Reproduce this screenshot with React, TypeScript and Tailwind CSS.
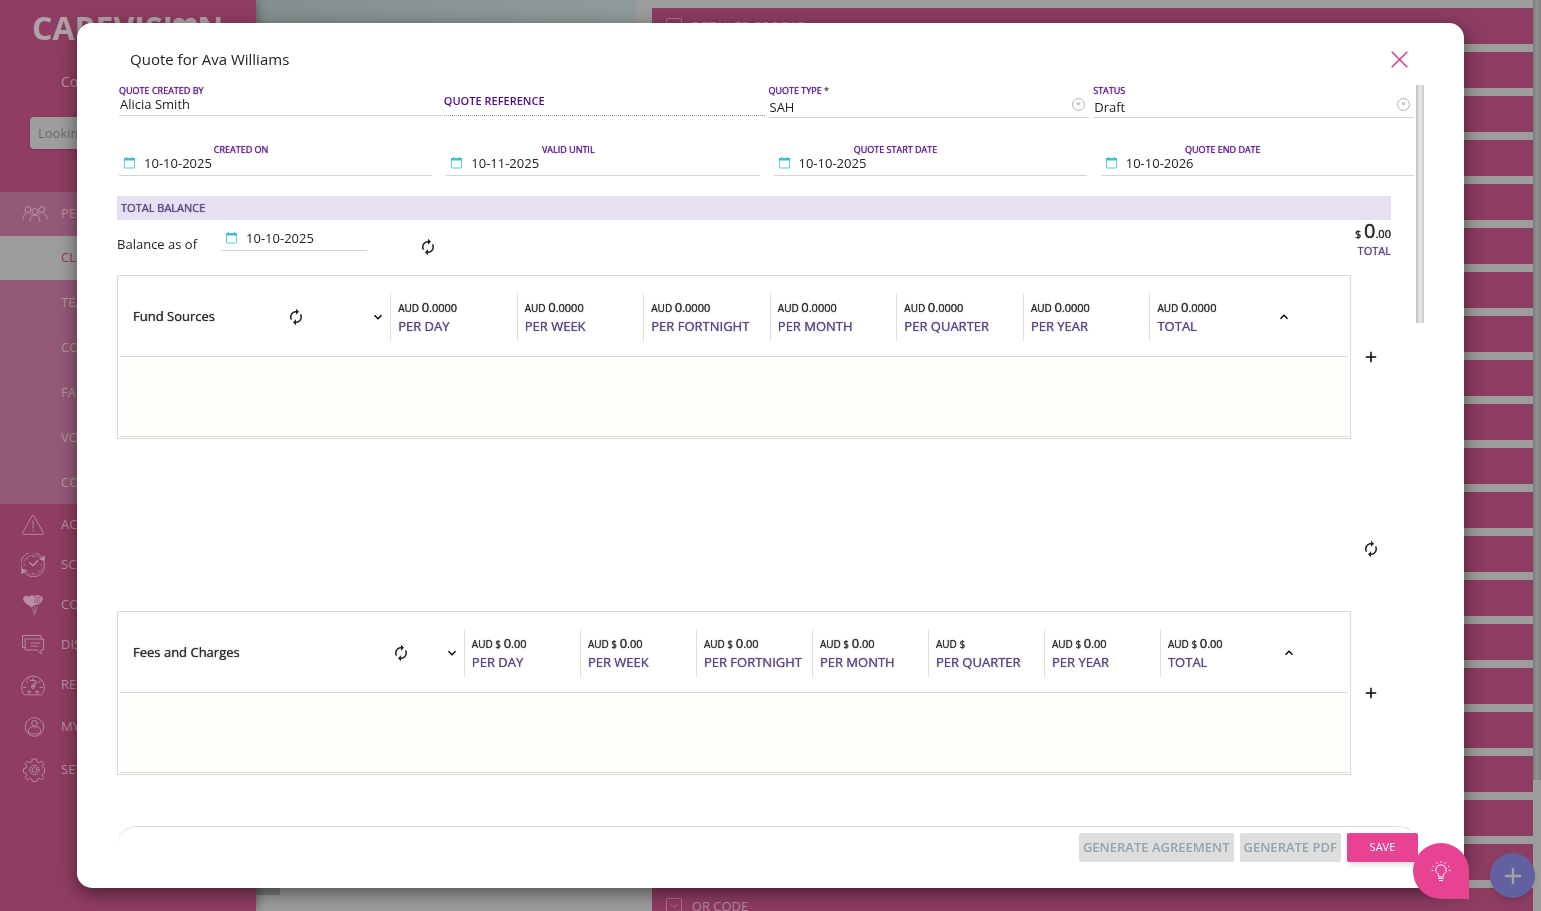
import { useState } from 'react';
import type { ReactNode } from 'react';
import clsx from 'clsx';
import {
  MdAdd,
  MdAutorenew,
  MdKeyboardArrowDown,
  MdKeyboardArrowUp,
} from 'react-icons/md';

const SUB_MENU = ['TEAM', 'CONTACTS', 'FAMILY', 'VOLUNTEERS', 'COMPANIES'];

const PROFILE_SECTIONS = [
  'DETAILED PROFILE',
  ...Array.from({ length: 19 }, () => ''),
  'QR CODE',
];

const PERIODS = [
  'PER DAY',
  'PER WEEK',
  'PER FORTNIGHT',
  'PER MONTH',
  'PER QUARTER',
  'PER YEAR',
  'TOTAL',
];

// Open Sans has no medium cut here, so a second pass of the text thickens it
const HEAVIER = '[text-shadow:0_0_1px_currentColor]';

const LineIcon = ({ children }: { children: ReactNode }) => (
  <svg
    className="size-6 shrink-0"
    viewBox="0 0 24 24"
    fill="none"
    stroke="currentColor"
    strokeWidth="0.9"
    strokeLinecap="round"
    strokeLinejoin="round"
    aria-hidden="true"
  >
    {children}
  </svg>
);

const PeopleIcon = () => (
  <svg
    className="h-5 w-[26px] shrink-0"
    viewBox="0 0 26 20"
    fill="none"
    stroke="currentColor"
    strokeLinecap="round"
    aria-hidden="true"
  >
    <circle cx="6" cy="5.5" r="2.9" />
    <circle cx="20" cy="5.5" r="2.9" />
    <circle cx="13" cy="7.5" r="3" />
    <path d="M1 15c0-3.5 1.5-5.500 4-6.200M8 9.200c1 .6 1.500 1.300 1.900 2M25 15c0-3.500-1.500-5.500-4-6.200M18 9.200c-1 .6-1.500 1.300-1.900 2M8.200 17c0-3.800 1.900-5.800 4.800-5.800s4.800 2 4.800 5.800" />
  </svg>
);

const MENU = [
  {
    label: 'ACTIVITY',
    height: 'h-10',
    icon: (
      <>
        <path d="M11.200 2.600 1.700 19.700c-.5.9 0 1.700 1 1.700h18.600c1 0 1.500-.8 1-1.700L12.800 2.600c-.4-.7-1.200-.7-1.600 0Z" />
        <path d="M12 7.500v7.500M12 17.300v.8" />
      </>
    ),
  },
  {
    label: 'SCHEDULE',
    height: 'h-10',
    icon: (
      <>
        <path d="M1.300 16.500A11.300 11.300 0 0 1 21 5M22.900 8.500A11.300 11.300 0 0 1 3.200 19.200" />
        <path d="M2.600 9A10 10 0 0 1 19.500 5.500M21.400 15A10 10 0 0 1 4.500 18.500" strokeWidth="0.5" />
        <path d="M23.300 3.300v4.200l-4-1.200ZM.8 20.300v-4.200l4 1.200Z" fill="currentColor" />
        <path d="m8.500 9.500 3.500 3.300 4.700-5" strokeWidth="1.3" />
        <path d="M12 3v1M12 20v1M3 12h1M20 12h1M5.600 5.600l.7.7M17.700 17.700l.7.7M5.600 18.400l.7-.7" />
      </>
    ),
  },
  {
    label: 'COMMUNITY',
    height: 'h-10',
    icon: (
      <>
        <path
          d="M9.500 13.500C5 11 1.800 8.500 2.200 5.300 2.600 2.700 6 2 8 4c1.500-2 4-2.200 5.500-.8 2-1.800 4.500-1.500 5.500.3h3l-1.200 1.500h1.500l-1.500 1.500h1.700l-2 1.500h1l-2 1.500h1l-2.500 1.500c-1.500.8-3.500.8-5 1.200L11.500 14Z"
          fill="currentColor"
          stroke="none"
        />
        <path d="m14 4.500 5 .3M13.500 7h5.500M13 9.200l5.500-.2" stroke="#8f3d62" strokeWidth="0.7" />
        <path d="m10 13 3.500 8.500 3-8.500M13.500 12.500l.3 8" strokeWidth="0.6" />
      </>
    ),
  },
  {
    label: 'DISCUSSION',
    height: 'h-10',
    icon: (
      <>
        <path d="M4 14.500H1.500v-12H20V6" />
        <path d="M4.500 6h18v11H20l.2 4-4-4H4.500Z" />
        <path d="M10 10h9M10 13h7" />
      </>
    ),
  },
  {
    label: 'REPORTS',
    height: 'h-10',
    icon: (
      <>
        <path d="M3 21.500C1.500 19.500.6 17 .6 14.500a11.400 11.400 0 0 1 22.800 0c0 2.500-.9 5-2.400 7Z" />
        <path d="M12 5v2.500M5 8l1.700 1.700M19 8l-1.700 1.700M2.500 14.500H5M19 14.500h2.500M7.500 5.500l.7 1.500M9.500 7.500h5" />
        <path d="m11 12.500 4.500-4-2.500 5.500Z" />
        <circle cx="12" cy="14" r="1.500" />
        <circle cx="8" cy="19" r="1.200" />
        <circle cx="16" cy="19" r="1.200" />
      </>
    ),
  },
  {
    label: 'MY PROFILE',
    height: 'h-11',
    icon: (
      <>
        <circle cx="13.500" cy="12" r="9.300" />
        <circle cx="13.500" cy="8.300" r="2.800" />
        <path d="M7.500 17.300v-2.100c0-2.200 2.200-3.400 4-3.400h4c1.800 0 4 1.200 4 3.400v2.100c-3.500 2.300-8.500 2.300-12 0Z" />
      </>
    ),
  },
  {
    label: 'SETTINGS',
    height: 'h-[42px]',
    icon: (
      <>
        <path d="M11.300 1h4.400l.5 2.800 2.200.9 2.300-1.600 2.200 2.300-1.600 2.300.9 2.200 1.300.4v4.400l-1.300.4-.9 2.200 1.600 2.300-2.200 2.300-2.300-1.600-2.200.9-.5 2.300h-4.400l-.5-2.300-2.200-.9-2.300 1.600-2.200-2.300 1.600-2.300-.9-2.200-2.300-.6v-3.800l2.300-.6.9-2.200L4.100 5.600l2.200-2.500 2.300 1.600 2.200-.9Z" />
        <circle cx="13.500" cy="12" r="4.600" />
        <circle cx="13.500" cy="12" r="2.400" />
      </>
    ),
  },
];

const Sidebar = () => (
  <nav className="z-10 w-64 shrink-0 bg-[#8f3d62] text-[13px] text-[#b98fa4] shadow-[2px_0_8px_rgba(0,0,0,0.3)]">
    <div className="flex h-14 items-center pl-8 text-[32px] font-bold text-[#aea3a8]">
      CAREVISI
      <svg className="h-6 w-6" viewBox="0 0 28 24" fill="currentColor" aria-hidden="true">
        <path d="M14 24C5 17 0 12.500 0 7.500 0 3 3.200 0 7.200 0 10 0 12.600 1.500 14 4c1.400-2.500 4-4 6.800-4C24.800 0 28 3 28 7.500 28 12.500 23 17 14 24Z" />
      </svg>
      N
    </div>
    <p className="pt-4 pl-[61px] text-sm leading-5">Coordinator</p>
    <div className="px-[30px] pt-[25px] pb-[43px]">
      <input
        type="search"
        aria-label="Search"
        placeholder="Looking for?"
        className="h-8 w-full rounded-sm bg-[#9e9e9e] px-2 shadow-sm placeholder:text-[#6e6a6c]"
      />
    </div>
    <a href="#people" className="flex h-11 items-center gap-[13px] bg-[#955978] pl-[22px]">
      <PeopleIcon />
      PEOPLE
    </a>
    <a href="#clients" className="flex h-11 items-center bg-[#9e9d9d] pl-[61px] text-[#96375f]">
      CLIENTS
    </a>
    <div className="h-56 bg-[#935a77] text-[#b294a5]">
      {SUB_MENU.map(item => (
        <a key={item} href="#people" className="flex h-[45px] items-center pl-[61px]">
          {item}
        </a>
      ))}
    </div>
    <div className="pt-px">
      {MENU.map(({ label, height, icon }) => (
        <a
          key={label}
          href="#menu"
          className={clsx('flex items-center gap-4 pl-[21px]', height)}
        >
          <LineIcon>{icon}</LineIcon>
          {label}
        </a>
      ))}
    </div>
  </nav>
);

const ProfileSections = () => (
  <div className="flex min-w-0 flex-1 flex-col gap-2 pt-2">
    {PROFILE_SECTIONS.map((title, index) => (
      <div
        key={index}
        className="flex h-9 shrink-0 items-center gap-[10px] bg-[#8d3c62] pl-[14px] text-[13px] leading-4 text-[#b98aa1]"
      >
        {title && (
          <>
            <svg className="size-4" viewBox="0 0 16 16" fill="none" stroke="currentColor" strokeWidth="0.7" aria-hidden="true">
              <rect x="0.500" y="0.500" width="15" height="15" rx="1" />
              <path d="m4.500 6.500 3.500 3 3.500-3" />
            </svg>
            {title}
          </>
        )}
      </div>
    ))}
  </div>
);

const CalendarIcon = () => (
  <svg className="h-3 w-[11px] shrink-0" viewBox="0 0 11 12" fill="none" aria-hidden="true">
    <rect x="0.500" y="1.500" width="10" height="9.500" rx="0.500" stroke="#5fd0d0" />
    <path d="M0 1h11v2.500H0zM2 0h1v2H2zM8 0h1v2H8z" fill="#3fbfc4" />
  </svg>
);

const DateInput = ({ id, value }: { id: string; value: string }) => (
  <div className="flex h-5 items-center gap-[9px] border-b border-[#d6d6d6] pb-[5px] pl-[5px]">
    <CalendarIcon />
    <input
      id={id}
      defaultValue={value}
      className="w-full min-w-0 text-[13px] leading-[14px] text-[#222]"
    />
  </div>
);

const DateField = ({ id, label, value }: { id: string; label: string; value: string }) => (
  <div>
    <label
      htmlFor={id}
      className={clsx('block w-[244px] text-center text-[9px] leading-3 text-[#5b1a8b]', HEAVIER)}
    >
      {label}
    </label>
    <DateInput id={id} value={value} />
  </div>
);

type SelectFieldProps = {
  id: string;
  label: string;
  options: string[];
  required?: boolean;
};

const SelectField = ({ id, label, options, required }: SelectFieldProps) => (
  <div className="px-[2px]">
    <label htmlFor={id} className={clsx('block text-[9px] leading-3 text-[#5b1a8b]', HEAVIER)}>
      {label}
      {required && <span className="text-[#444]"> *</span>}
    </label>
    <div className="flex h-[21px] items-center border-b border-[#d6d6d6] pr-1">
      <select id={id} className="h-5 w-full appearance-none pt-px pl-px text-[13px] text-[#222]">
        {options.map(option => (
          <option key={option}>{option}</option>
        ))}
      </select>
      <svg
        className="mb-[6px] size-[13px] shrink-0"
        viewBox="0 0 13 13"
        fill="none"
        stroke="#a49cab"
        aria-hidden="true"
      >
        <circle cx="6.500" cy="6.500" r="6" strokeWidth="0.800" />
        <path d="M5 4.300 6.500 7.200 8 4.300" />
      </svg>
    </div>
  </div>
);

type Amount = { currency: string; whole?: string; decimals?: string };

type FundPanelProps = {
  title: string;
  titleWidth: string;
  refreshGap: string;
  collapseGap?: string;
  amounts: Amount[];
};

const FundPanel = ({ title, titleWidth, refreshGap, collapseGap, amounts }: FundPanelProps) => (
  <section className="flex items-center">
    <div className="min-w-0 flex-1 border border-[#d9d9d9] px-[2px] pb-px">
      <header className="flex h-20 items-center pt-px">
        <div className={clsx('flex shrink-0 items-center pr-1 pl-[13px]', titleWidth)}>
          <h3 className={clsx('flex-1 text-[13px] text-[#2b2b2b]', HEAVIER)}>{title}</h3>
          <button type="button" aria-label={`Refresh ${title}`} className={refreshGap}>
            <MdAutorenew className="size-[18px] text-[#222]" />
          </button>
          <button type="button" aria-label={`Expand ${title}`}>
            <MdKeyboardArrowDown className="size-4 text-black" />
          </button>
        </div>
        {PERIODS.map((period, index) => {
          const { currency, whole, decimals } = amounts[index];
          return (
            <div
              key={period}
              className={clsx(
                'h-12 min-w-0 flex-1 border-l border-[#dedede] pt-[5px] pl-[7px] whitespace-nowrap',
                HEAVIER,
              )}
            >
              <p className="text-[10px] leading-[18px] text-[#2b2b2b]">
                {currency} <span className="text-[13px]">{whole}</span>
                <span className="text-[11px]">{decimals}</span>
              </p>
              <p className={clsx('text-[13px] leading-[18px] text-[#5c4685]', HEAVIER)}>{period}</p>
            </div>
          );
        })}
        <div className={clsx('w-[72px] shrink-0', collapseGap)}>
          <button type="button" aria-label={`Collapse ${title}`} className="block">
            <MdKeyboardArrowUp className="size-4 text-black" />
          </button>
        </div>
      </header>
      <div className="h-[81px] border-y border-[#dddbd8] bg-[#fffefa]" />
    </div>
    <button type="button" aria-label={`Add to ${title}`} className="flex w-10 justify-center">
      <MdAdd className="size-[18px] text-black" />
    </button>
  </section>
);

const FUND_AMOUNTS: Amount[] = PERIODS.map(() => ({
  currency: 'AUD',
  whole: '0',
  decimals: '.0000',
}));

const FEE_AMOUNTS: Amount[] = PERIODS.map(period =>
  period === 'PER QUARTER'
    ? { currency: 'AUD $' }
    : { currency: 'AUD $', whole: '0', decimals: '.00' },
);

const QuoteDialog = ({ onClose }: { onClose: () => void }) => (
  <div className="fixed inset-0 z-20 px-[5%] py-[23px]">
    <div
      role="dialog"
      aria-labelledby="quote-title"
      className="flex h-full flex-col rounded-[15px] bg-white px-10 shadow-[0_5px_18px_0_rgba(0,0,0,0.5)]"
    >
      <div className="flex h-15 shrink-0 items-center justify-between pt-3 pr-4 pl-[13px]">
        <h2 id="quote-title" className="text-[15px] text-[#222]">
          Quote for Ava Williams
        </h2>
        <button type="button" aria-label="Close" onClick={onClose}>
          <svg className="size-[17px]" viewBox="0 0 17 17" stroke="#d3458c" strokeWidth="1.600" aria-hidden="true">
            <path d="m.7.700 15.600 15.600M16.300.7.700 16.300" />
          </svg>
        </button>
      </div>

      <div className="flex min-h-0 flex-1 overflow-hidden pt-[2px]">
        <div className="min-w-0 flex-1">
          <div className="grid h-[59px] grid-cols-4 items-start">
            <div className="pl-[2px]">
              <label
                htmlFor="created-by"
                className={clsx('block text-[9px] leading-3 text-[#5b1a8b]', HEAVIER)}
              >
                QUOTE CREATED BY
              </label>
              <input
                id="created-by"
                defaultValue="Alicia Smith"
                className="block h-[19px] w-full border-b border-[#d6d6d6] pb-1 pl-px text-[13px] leading-[14px] text-[#222]"
              />
            </div>
            <div className="pr-[2px] pl-[2px]">
              <div className="flex h-[31px] items-center border-b border-dotted border-[#9a9a9a] pt-[2px]">
                <label
                  htmlFor="reference"
                  className="text-[11px] font-semibold whitespace-nowrap text-[#4b0d85]"
                >
                  QUOTE REFERENCE
                </label>
                <input id="reference" className="w-full min-w-0 pl-2 text-[13px]" />
              </div>
            </div>
            <SelectField id="quote-type" label="QUOTE TYPE" options={['SAH']} required />
            <SelectField id="status" label="STATUS" options={['Draft']} />
          </div>

          <div className="grid grid-cols-4 gap-[14px] pr-[2px] pl-[2px]">
            <DateField id="created-on" label="CREATED ON" value="10-10-2025" />
            <DateField id="valid-until" label="VALID UNTIL" value="10-11-2025" />
            <DateField id="start-date" label="QUOTE START DATE" value="10-10-2025" />
            <DateField id="end-date" label="QUOTE END DATE" value="10-10-2026" />
          </div>

          <div className="pt-5 pr-[25px]">
            <h3 className={clsx('bg-[#e7dff2] pl-1 text-[11px] leading-6 text-[#5c4685]', HEAVIER)}>
              TOTAL BALANCE
            </h3>
            <div className="flex h-[55px] items-start">
              <label htmlFor="balance-date" className="w-[104px] pt-[14px] text-[13px] leading-5 text-[#222]">
                Balance as of
              </label>
              <div className="w-[146px] pt-[11px]">
                <DateInput id="balance-date" value="10-10-2025" />
              </div>
              <button type="button" aria-label="Refresh balance" className="pt-[18px] pl-[52px]">
                <MdAutorenew className="size-[18px] text-[#222]" />
              </button>
              <div className={clsx('ml-auto text-right', HEAVIER)}>
                <p className="h-6 text-[11px] leading-[22px] text-[#222]">
                  $ <span className="text-xl leading-[22px]">0</span>.00
                </p>
                <p className={clsx('text-[11px] leading-[14px] text-[#5c4685]', HEAVIER)}>TOTAL</p>
              </div>
            </div>

            <FundPanel
              title="Fund Sources"
              titleWidth="w-[22%]"
              refreshGap="mr-[65px]"
              amounts={FUND_AMOUNTS}
            />
            <div className="flex h-[172px] justify-end pt-[101px]">
              <button type="button" aria-label="Refresh charges" className="flex h-5 w-10 justify-center">
                <MdAutorenew className="size-[18px] text-[#222]" />
              </button>
            </div>
            <FundPanel
              title="Fees and Charges"
              titleWidth="w-[28%]"
              refreshGap="mr-[34px]"
              collapseGap="pl-[5px]"
              amounts={FEE_AMOUNTS}
            />
          </div>
        </div>
        <div className="h-[238px] w-2 bg-linear-to-r from-[#bdbdbd] via-[#ececec] to-[#c8c8c8]" />
      </div>

      <footer className="mr-[6px] flex h-[62px] shrink-0 items-start justify-end gap-[6px] rounded-t-[20px] border-t border-[#dcdcdc] pt-[6px]">
        <button
          type="button"
          disabled
          className="h-[29px] rounded-xs bg-[#dedede] px-1 text-[13px] font-semibold text-[#94a3ad]"
        >
          GENERATE AGREEMENT
        </button>
        <button
          type="button"
          disabled
          className="h-[29px] rounded-xs bg-[#dedede] px-1 text-[13px] font-semibold text-[#94a3ad]"
        >
          GENERATE PDF
        </button>
        <button
          type="button"
          className="h-[29px] w-[71px] rounded-xs bg-[#e84393] text-[11px] text-white shadow-md"
        >
          SAVE
        </button>
      </footer>
    </div>
  </div>
);

const App = () => {
  const [open, setOpen] = useState(true);

  return (
    <div className="relative flex h-screen overflow-hidden bg-[#9e9d9d] font-['Open_Sans','Noto_Sans',sans-serif]">
      <Sidebar />
      <main className="flex min-w-0 flex-1">
        <div className="flex w-[30.8%] shrink-0 flex-col items-start justify-between">
          <div className="h-60 w-[96%] bg-linear-to-r from-[#858e8e] to-[#8f9b9a]" />
          <button
            type="button"
            aria-label="Toggle menu"
            className="mb-4 size-6 bg-[#7d7d7d]"
          />
        </div>
        <ProfileSections />
        <div className="w-2 shrink-0">
          <div className="h-[780px] bg-linear-to-r from-[#7b7b7b] via-[#949494] to-[#7f7f7f]" />
        </div>
      </main>

      <button
        type="button"
        aria-label="Add"
        className="absolute right-[6px] bottom-[13px] z-10 flex size-[45px] items-center justify-center rounded-full bg-[#62609f] text-[#a3a2a8] shadow-md"
      >
        <MdAdd className="size-7" />
      </button>

      {open && <QuoteDialog onClose={() => setOpen(false)} />}

      <button
        type="button"
        aria-label="Tips"
        className="absolute right-[72px] bottom-3 z-30 flex size-14 items-center justify-center rounded-full rounded-br-md bg-[#e84393] text-white"
      >
        <svg
          className="size-5"
          viewBox="0 0 20 20"
          fill="none"
          stroke="currentColor"
          strokeLinecap="round"
          aria-hidden="true"
        >
          <path d="M7.700 15.500v-2c-1.700-1-2.900-2.500-2.900-4.500a5.200 5.200 0 0 1 10.400 0c0 2-1.200 3.500-2.900 4.500v2ZM7.700 17.500h4.600M8.500 19.500h3" />
          <path d="M10 .6v.8M5.500 1.800l.4.700M14.500 1.800l-.4.700M2 5.200l.7.400M18 5.200l-.7.400M1 9.500h.8M18.200 9.500h.8" />
        </svg>
      </button>
    </div>
  );
};

export default App;
